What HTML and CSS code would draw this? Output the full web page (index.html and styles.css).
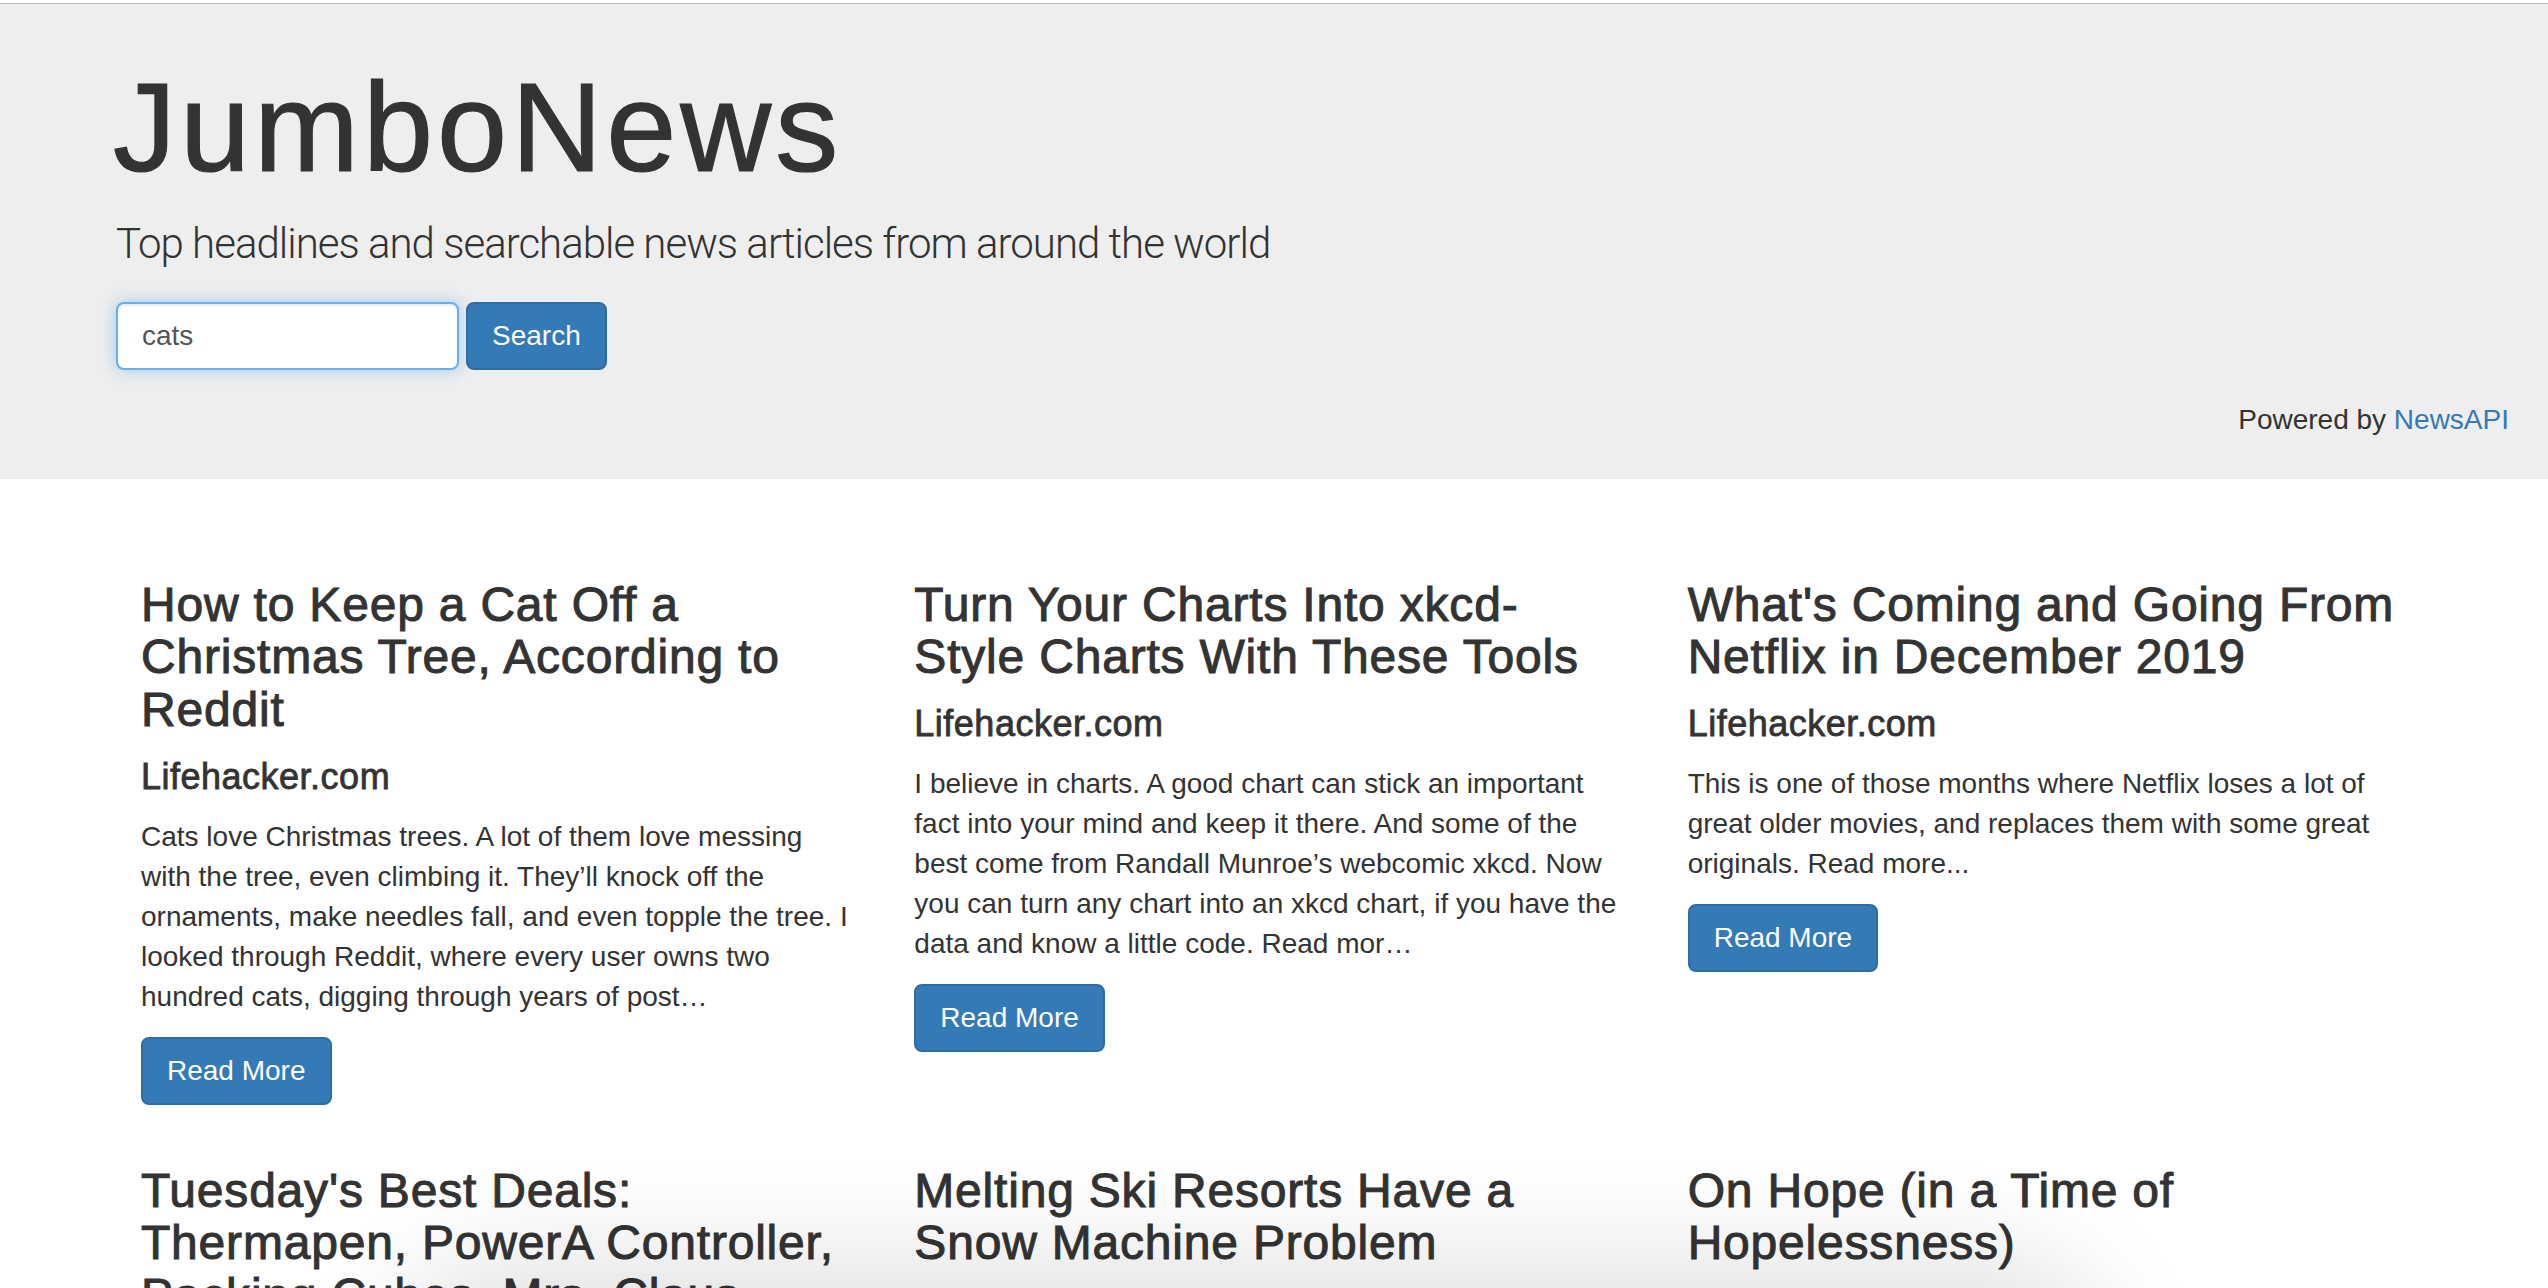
FILE: index.html
```html
<!DOCTYPE html>
<html lang="en">
<head>
<meta charset="utf-8">
<title>JumboNews</title>
<link rel="stylesheet" href="styles.css">
</head>
<body>
<header class="jumbotron">
  <h1 class="brand">JumboNews</h1>
  <p class="tagline">Top headlines and searchable news articles from around the world</p>
  <form class="search" onsubmit="return false">
    <input class="search-input" type="text" value="cats">
    <button class="btn" type="submit">Search</button>
  </form>
  <p class="powered">Powered by <a class="link" href="#">NewsAPI</a></p>
</header>

<main class="articles">
  <article class="card">
    <h3 class="card-title">How to Keep a Cat Off a Christmas Tree, According to Reddit</h3>
    <h4 class="card-source">Lifehacker.com</h4>
    <p class="card-text">Cats love Christmas trees. A lot of them love messing with the tree, even climbing it. They’ll knock off the ornaments, make needles fall, and even topple the tree. I looked through Reddit, where every user owns two hundred cats, digging through years of post…</p>
    <div class="card-action"><a class="btn" href="#">Read More</a></div>
  </article>
  <article class="card">
    <h3 class="card-title">Turn Your Charts Into xkcd-<br>Style Charts With These Tools</h3>
    <h4 class="card-source">Lifehacker.com</h4>
    <p class="card-text">I believe in charts. A good chart can stick an important fact into your mind and keep it there. And some of the best come from Randall Munroe’s webcomic xkcd. Now you can turn any chart into an xkcd chart, if you have the data and know a little code. Read mor…</p>
    <div class="card-action"><a class="btn" href="#">Read More</a></div>
  </article>
  <article class="card">
    <h3 class="card-title">What's Coming and Going From Netflix in December 2019</h3>
    <h4 class="card-source">Lifehacker.com</h4>
    <p class="card-text">This is one of those months where Netflix loses a lot of great older movies, and replaces them with some great originals. Read more...</p>
    <div class="card-action"><a class="btn" href="#">Read More</a></div>
  </article>
  <article class="card">
    <h3 class="card-title">Tuesday's Best Deals: Thermapen, PowerA Controller, Packing Cubes, Mrs. Claus Sweatshirts, and More</h3>
    <h4 class="card-source">Kinja.com</h4>
    <p class="card-text">Thermapen, PowerA Controller, Packing Cubes, and more lead off Tuesday’s best deals from around the web. Read more…</p>
    <div class="card-action"><a class="btn" href="#">Read More</a></div>
  </article>
  <article class="card">
    <h3 class="card-title">Melting Ski Resorts Have a Snow Machine Problem</h3>
    <h4 class="card-source">Wired</h4>
    <p class="card-text">As winters get warmer, ski resorts are leaning ever harder on artificial snow, and that comes with its own costs.</p>
    <div class="card-action"><a class="btn" href="#">Read More</a></div>
  </article>
  <article class="card">
    <h3 class="card-title">On Hope (in a Time of Hopelessness)</h3>
    <h4 class="card-source">Medium.com</h4>
    <p class="card-text">Some thoughts on finding hope when the news seems to offer very little of it.</p>
    <div class="card-action"><a class="btn" href="#">Read More</a></div>
  </article>
</main>

<div class="bottom-shadow"></div>
</body>
</html>
```

FILE: styles.css
```css
html, body {
  margin: 0;
  padding: 0;
  background: #fff;
}

body {
  font-family: "Liberation Sans", Arial, Helvetica, sans-serif;
  font-size: 28px;
  line-height: 40px;
  color: #333;
  padding-top: 3px;
}

.jumbotron {
  background: #eee;
  border-top: 1px solid #b9b9b9;
  padding: 55px 39px 39px 116px;
}

.brand {
  margin: 0 0 0 -3px;
  font-size: 126px;
  line-height: 138.6px;
  font-weight: 400;
  letter-spacing: 4px;
  color: #333;
  -webkit-text-stroke: 1.2px #333;
}

.tagline {
  margin: 16px 0 0;
  font-family: Roboto, "Liberation Sans", sans-serif;
  font-weight: 300;
  font-size: 42px;
  line-height: 60px;
  letter-spacing: -1px;
  color: #333;
}

.search {
  display: flex;
  gap: 7px;
  margin: 28px 0 0;
}

.search-input {
  box-sizing: border-box;
  width: 343px;
  height: 68px;
  padding: 12px 24px;
  border: 2px solid #66afe9;
  border-radius: 8px;
  background: #fff;
  font-family: "Liberation Sans", Arial, sans-serif;
  font-size: 28px;
  line-height: 40px;
  color: #555;
  outline: none;
  box-shadow: inset 0 2px 2px rgba(0, 0, 0, 0.075), 0 0 16px rgba(102, 175, 233, 0.6);
}

.btn {
  box-sizing: border-box;
  display: inline-block;
  height: 68px;
  padding: 12px 24px;
  border: 2px solid #2e6da4;
  border-radius: 8px;
  background: #337ab7;
  color: #fff;
  font-family: "Liberation Sans", Arial, sans-serif;
  font-size: 28px;
  line-height: 40px;
  text-decoration: none;
  white-space: nowrap;
  cursor: pointer;
}

.powered {
  margin: 30px 0 0;
  text-align: right;
}

.link {
  color: #337ab7;
  text-decoration: none;
}

.articles {
  display: grid;
  grid-template-columns: repeat(3, 1fr);
  width: 2320px;
  margin: 60px 0 0 111px;
}

.card {
  padding: 0 30px 20px;
}

.card-title {
  margin: 40px 0 20px;
  font-size: 48px;
  line-height: 52.8px;
  font-weight: 400;
  letter-spacing: 0.8px;
  -webkit-text-stroke: 1px #333;
}

.card-source {
  margin: 0 0 20px;
  font-size: 36px;
  line-height: 39.6px;
  font-weight: 400;
  letter-spacing: 0.5px;
  -webkit-text-stroke: 0.8px #333;
}

.card-text {
  margin: 0 0 20px;
}

.card-action {
  display: flex;
}

.bottom-shadow {
  position: fixed;
  left: 420px;
  width: 1660px;
  top: 1300px;
  height: 400px;
  border-radius: 80px;
  background: #e6e6e6;
  box-shadow: 0 -10px 120px 20px rgba(0, 0, 0, 0.14);
  pointer-events: none;
}
```
